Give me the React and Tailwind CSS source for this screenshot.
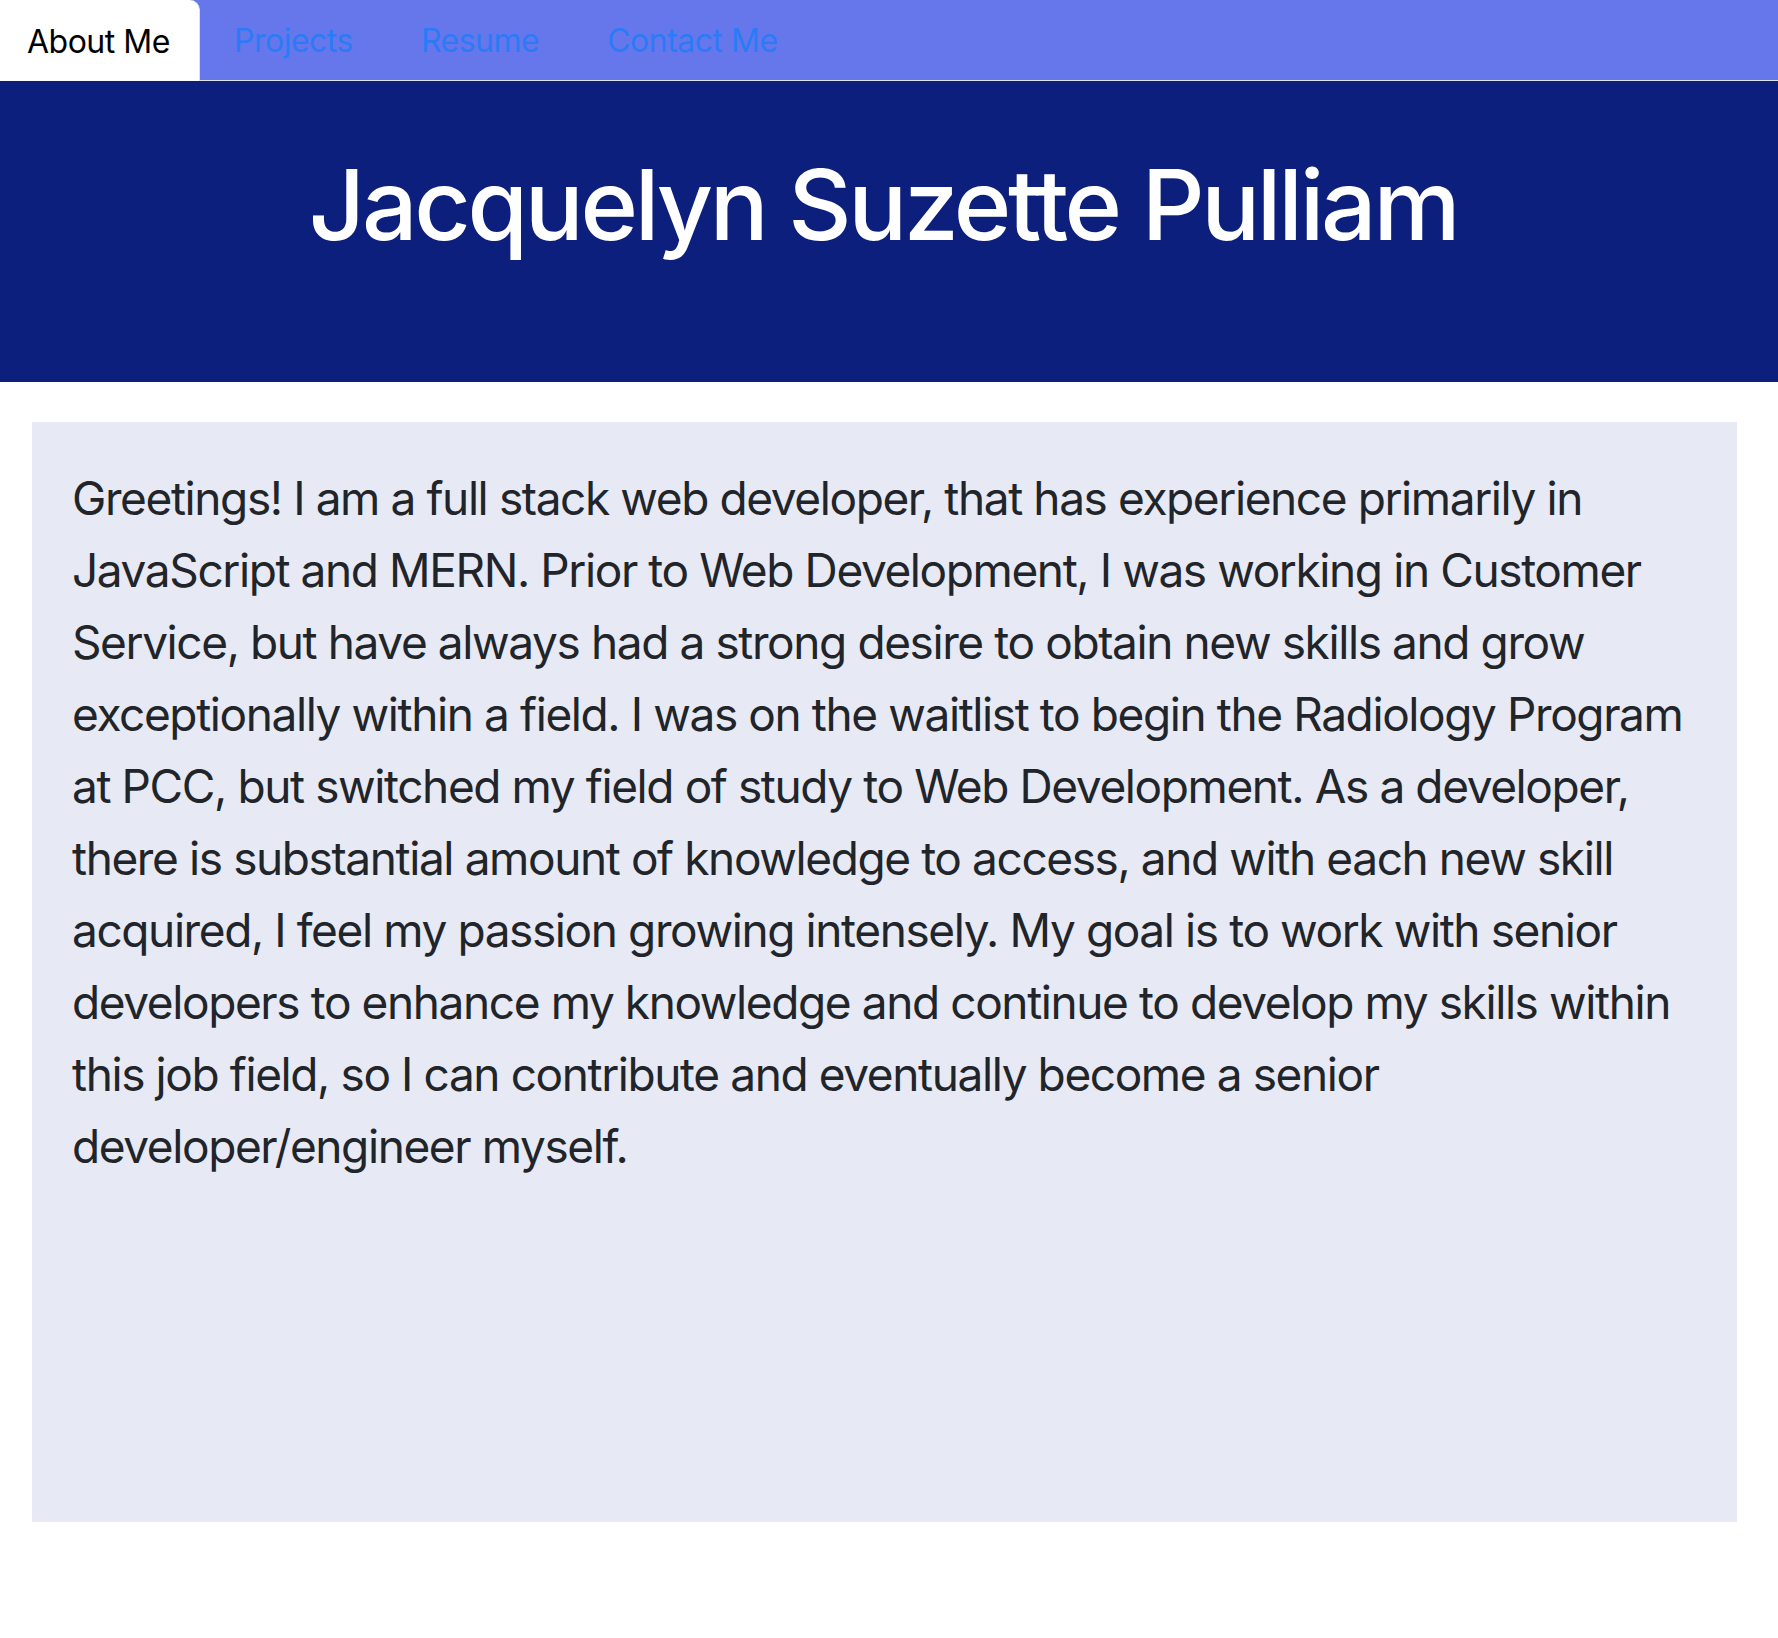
import React from 'react';

const tabs = ['About Me', 'Projects', 'Resume', 'Contact Me'];

const App = () => {
  return (
    <div className="min-h-screen bg-white" style={{ fontFamily: 'Inter, "Noto Sans", sans-serif' }}>
      {/* Nav */}
      <nav className="flex h-[81px] bg-[#6577ea] border-b border-[#dee2e6]">
        {tabs.map((tab, i) => (
          <a
            key={tab}
            href="#"
            className={
              i === 0
                ? 'flex items-center w-[200px] h-[81px] pl-[27px] pt-[2px] bg-white text-black text-[32px] tracking-[-0.5px] rounded-tr-[10px] border-r border-[#dee2e6]'
                : 'flex items-center h-[80px] px-[34px] pt-[2px] text-[#2b7bf7] text-[32px] tracking-[-0.5px]'
            }
          >
            {tab}
          </a>
        ))}
      </nav>

      {/* Header */}
      <header className="h-[301px] bg-[#0c1f7c] pt-[65px]">
        <h1 className="text-center text-white text-[98px] font-medium leading-[1.2] tracking-[-3.3px] -translate-x-[6px]">
          Jacquelyn Suzette Pulliam
        </h1>
      </header>

      {/* About */}
      <section className="ml-[32px] mr-[41px] mt-[40px] h-[1100px] bg-[#e7e9f5] px-[40px] pt-[40px]">
        <p className="text-[46px] leading-[72px] tracking-[-1.4px] text-[#212529]">
          Greetings! I am a full stack web developer, that has experience primarily in JavaScript and MERN. Prior to Web Development, I was working in Customer Service, but have always had a strong desire to obtain new skills and grow exceptionally within a field. I was on the waitlist to begin the Radiology Program at PCC, but switched my field of study to Web Development. As a developer, there is substantial amount of knowledge to access, and with each new skill acquired, I feel my passion growing intensely. My goal is to work with senior developers to enhance my knowledge and continue to develop my skills within this job field, so I can contribute and eventually become a senior developer/engineer myself.
        </p>
      </section>
    </div>
  );
};

export default App;
